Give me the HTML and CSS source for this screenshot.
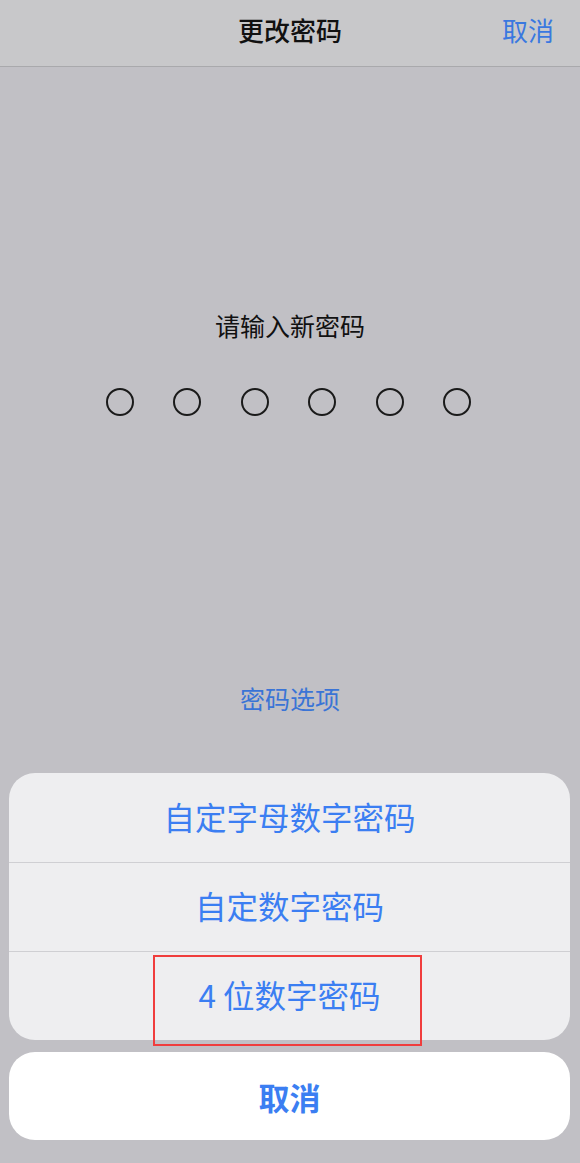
FILE: index.html
```html
<!DOCTYPE html>
<html lang="zh-CN">
<head>
    <meta charset="UTF-8">
    <meta name="viewport" content="width=device-width, initial-scale=1.0">
    <title>更改密码</title>
    <link rel="stylesheet" href="styles.css">
</head>
<body>
    <div class="header">
        <span class="title">更改密码</span>
        <span class="cancel-link">取消</span>
    </div>

    <div class="main">
        <div class="prompt">请输入新密码</div>
        <div class="dots">
            <span class="dot"></span>
            <span class="dot"></span>
            <span class="dot"></span>
            <span class="dot"></span>
            <span class="dot"></span>
            <span class="dot"></span>
        </div>
        <div class="options">密码选项</div>

        <div class="sheet-wrap">
            <div class="sheet">
                <div class="row">自定字母数字密码</div>
                <div class="row">自定数字密码</div>
                <div class="row">4 位数字密码</div>
            </div>
            <div class="mark"></div>
        </div>

        <div class="cancel-btn">取消</div>
    </div>
</body>
</html>
```

FILE: styles.css
```css
body{
    margin: 0;
    width: 580px;
    height: 1163px;
    background: #c1c0c5;
    font-family: "Noto Sans CJK SC", "Noto Sans", sans-serif;
    overflow: hidden;
}
.header{
    height: 66px;
    background: #c8c8ca;
    border-bottom: 1px solid #a9a9ac;
    position: relative;
    display: flex;
    align-items: center;
    justify-content: center;
}
.title{
    font-size: 26px;
    line-height: 30px;
    font-weight: 500;
    color: #111;
    margin-bottom: 6px;
}
.cancel-link{
    position: absolute;
    right: 26px;
    top: 15px;
    font-size: 26px;
    line-height: 30px;
    color: #3a78e0;
}
.main{
    display: flex;
    flex-direction: column;
    align-items: center;
}
.prompt{
    margin-top: 243px;
    font-size: 25px;
    line-height: 30px;
    color: #111;
}
.dots{
    margin-top: 48px;
    display: flex;
    gap: 39.4px;
    margin-left: -3px;
}
.dot{
    width: 24px;
    height: 24px;
    border: 2px solid #1a1a1a;
    border-radius: 50%;
}
.options{
    margin-top: 267px;
    font-size: 25px;
    line-height: 30px;
    color: #3a74d6;
}
.sheet-wrap{
    margin-top: 60px;
    width: 561px;
    margin-left: -1px;
    position: relative;
}
.sheet{
    background: #eeeef0;
    border-radius: 26px;
    overflow: hidden;
}
.row{
    height: 88px;
    box-sizing: border-box;
    padding-bottom: 4px;
    display: flex;
    align-items: center;
    justify-content: center;
    font-size: 31.5px;
    color: #3b7ef2;
    border-top: 1px solid #cfcfd3;
}
.row:first-child{
    border-top: none;
    height: 89px;
}
.row + .row{
    height: 89px;
}
.mark{
    position: absolute;
    left: 144px;
    top: 182px;
    width: 265px;
    height: 87px;
    border: 2px solid #f03d3d;
}
.cancel-btn{
    margin-top: 12px;
    width: 561px;
    margin-left: -1px;
    height: 88px;
    background: #fff;
    border-radius: 26px;
    display: flex;
    align-items: center;
    justify-content: center;
    font-size: 31px;
    font-weight: bold;
    color: #3b7ef2;
}
```
